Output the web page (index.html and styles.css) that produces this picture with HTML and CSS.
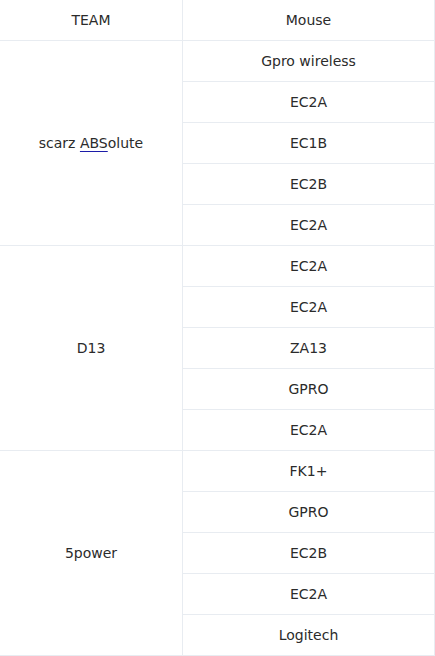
FILE: index.html
```html
<!DOCTYPE html>
<html>
<head>
<meta charset="utf-8">
<link rel="stylesheet" href="styles.css">
</head>
<body>
<table class="grid">
  <colgroup><col class="c-team"><col class="c-mouse"></colgroup>
  <tr><td>TEAM</td><td>Mouse</td></tr>
  <tr><td rowspan="5">scarz <span class="abs">ABS</span>olute</td><td>Gpro wireless</td></tr>
  <tr><td>EC2A</td></tr>
  <tr><td>EC1B</td></tr>
  <tr><td>EC2B</td></tr>
  <tr><td>EC2A</td></tr>
  <tr><td rowspan="5">D13</td><td>EC2A</td></tr>
  <tr><td>EC2A</td></tr>
  <tr><td>ZA13</td></tr>
  <tr><td>GPRO</td></tr>
  <tr><td>EC2A</td></tr>
  <tr><td rowspan="5">5power</td><td>FK1+</td></tr>
  <tr><td>GPRO</td></tr>
  <tr><td>EC2B</td></tr>
  <tr><td>EC2A</td></tr>
  <tr><td>Logitech</td></tr>
</table>
</body>
</html>
```
FILE: styles.css
```css
html, body {
  margin: 0;
  padding: 0;
  background: #ffffff;
}
.grid {
  border-collapse: separate;
  border-spacing: 0;
  table-layout: fixed;
  width: 435px;
  font-family: "DejaVu Sans", "Liberation Sans", sans-serif;
  font-size: 14px;
  color: #2b2b2b;
}
.c-team { width: 183px; }
.c-mouse { width: 252px; }
.grid td {
  height: 40px;
  padding: 0;
  text-align: center;
  vertical-align: middle;
  border-right: 1px solid #e8ecf1;
  border-bottom: 1px solid #e8ecf1;
  line-height: 20px;
}
.abs {
  text-decoration: underline;
  text-decoration-color: #1c1ca8;
  text-underline-offset: 3px;
}
```
